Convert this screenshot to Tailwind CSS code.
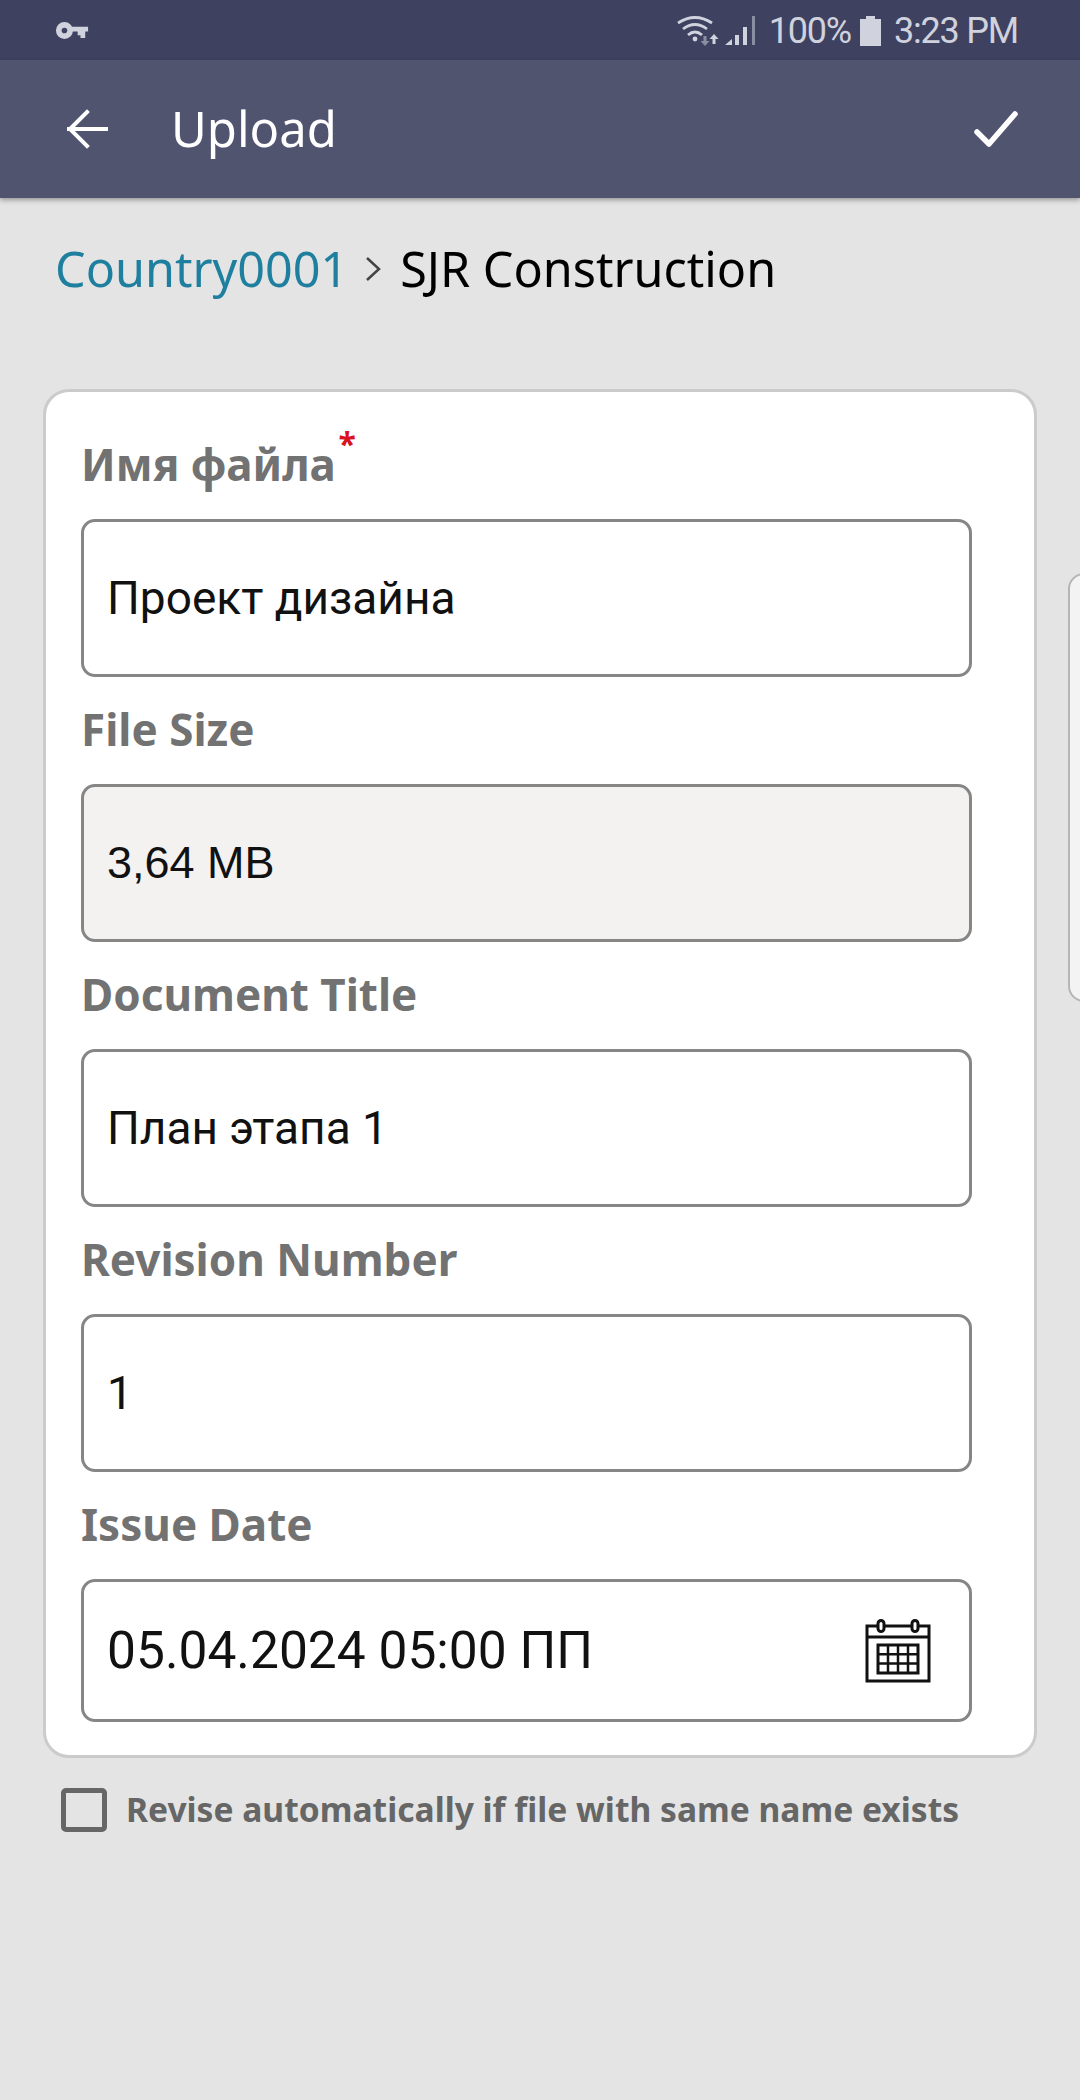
<!DOCTYPE html>
<html lang="en">
<head>
    <meta charset="UTF-8">
    <meta name="viewport" content="width=device-width, initial-scale=1.0">
    <script src="https://cdn.jsdelivr.net/npm/@tailwindcss/browser@4"></script>
    <title>Upload</title>
</head>
<body class="relative w-[1080px] h-[2100px] overflow-hidden bg-[#e4e4e4] font-['Noto_Sans',sans-serif]">

    <!-- status bar -->
    <div class="h-[60px] bg-[#3e4260] flex items-center justify-between pl-[55px] pr-[62px] text-[#d0d2de]">
        <svg width="34" height="19" viewBox="0 0 36 20" fill="currentColor">
            <path fill-rule="evenodd" d="M10 1a9 9 0 1 1 0 18a9 9 0 0 1 0-18zm0 6a3 3 0 1 0 0 6a3 3 0 0 0 0-6z"/>
            <path d="M17 6h18v5h-3v7h-5v-3h-3v-4h-7z"/>
        </svg>
        <div class="flex items-center pt-[2px] font-['Roboto',sans-serif] text-[36px] tracking-[-1.200px] leading-none">
            <svg width="78" height="31" viewBox="0 0 78 31" class="mr-[14px]">
                <g fill="none" stroke="currentColor" stroke-width="2.800">
                    <path d="M1 7Q18 -4 35 7"/>
                    <path d="M6 13Q18 4 30 13"/>
                    <path d="M11 19Q18 13 25 19"/>
                </g>
                <circle cx="18" cy="23" r="2.400" fill="currentColor"/>
                <path d="M26.500 20h3v5h3l-4.500 5l-4.500-5h3z" fill="#8b8da0"/>
                <path d="M37 18l4.500 5h-3v5h-3v-5h-3z" fill="currentColor"/>
                <path d="M48 29l7-6v6z" fill="currentColor"/>
                <path d="M58 19h4v10h-4z M66 11h4v18h-4z" fill="currentColor"/>
                <path d="M75 0h3v29h-3z" fill="#8b8da0"/>
            </svg>
            <span>100%</span>
            <svg width="21" height="30" viewBox="0 0 21 30" class="ml-[9px] mr-[13px]" fill="currentColor">
                <path d="M6 0h9v3h6v27H0V3h6z"/>
            </svg>
            <span>3:23 PM</span>
        </div>
    </div>

    <!-- app bar -->
    <header class="relative h-[138px] bg-[#51546f] flex items-center justify-between pl-[66px] pr-[62px] shadow-[0_2px_5px_rgba(0,0,0,0.35)]">
        <div class="flex items-center">
            <svg width="42" height="40" viewBox="0 0 42 40" fill="none" stroke="white" stroke-width="4" stroke-linecap="square">
                <path d="M3 20H40"/>
                <path d="M21 3L4 20L21 37"/>
            </svg>
            <span class="ml-[63px] pb-[2px] text-[49px] leading-none text-white">Upload</span>
        </div>
        <svg width="44" height="38" viewBox="0 0 44 38" fill="none" stroke="white" stroke-width="5.500" stroke-linecap="round" stroke-linejoin="round">
            <path d="M3 22L15 34L41 4"/>
        </svg>
    </header>

    <main class="px-[43px]">
        <!-- breadcrumb -->
        <div class="h-[191px] pt-[40px] pl-[12px] flex items-start text-[48.500px] leading-[60px]">
            <span class="text-[#1f7f9f]">Country0001</span>
            <svg width="16" height="26" viewBox="0 0 16 26" fill="none" stroke="#444444" stroke-width="2.500" class="ml-[17px] mr-[19px] mt-[18px]">
                <path d="M2 2L14 13L2 24"/>
            </svg>
            <span class="text-black">SJR Construction</span>
        </div>

        <!-- form card -->
        <form class="w-[994px] h-[1369px] bg-white border-[3px] border-[#cbcbcb] rounded-[26px] pl-[35px] pr-[62px]">
            <div class="h-[127px] pt-[17px] flex items-center">
                <label class="relative text-[44px] font-bold leading-none text-[#727272]">Имя файла<span class="absolute -right-[20px] -top-[14px] text-[32px] text-[#d9121f]">*</span></label>
            </div>
            <div class="h-[158px] border-[3px] border-[#868686] rounded-[14px] px-[23px] flex items-center text-[46px] text-[#111111] font-['Roboto',sans-serif]">Проект дизайна</div>

            <div class="h-[107px] pb-[3px] flex items-center text-[44px] font-bold leading-none text-[#727272]">File Size</div>
            <div class="h-[158px] bg-[#f3f2f1] border-[3px] border-[#868686] rounded-[14px] px-[23px] flex items-center text-[45px] text-[#111111] font-['Liberation_Sans',sans-serif]">3,64 MB</div>

            <div class="h-[107px] pb-[3px] flex items-center text-[44px] font-bold leading-none text-[#727272]">Document Title</div>
            <div class="h-[158px] border-[3px] border-[#868686] rounded-[14px] px-[23px] flex items-center text-[46px] text-[#111111] font-['Roboto',sans-serif]">План этапа 1</div>

            <div class="h-[107px] pb-[3px] flex items-center text-[44px] font-bold leading-none text-[#727272]">Revision Number</div>
            <div class="h-[158px] border-[3px] border-[#868686] rounded-[14px] px-[23px] flex items-center text-[46px] text-[#111111] font-['Roboto',sans-serif]">1</div>

            <div class="h-[107px] pb-[3px] flex items-center text-[44px] font-bold leading-none text-[#727272]">Issue Date</div>
            <div class="h-[143px] border-[3px] border-[#868686] rounded-[14px] pl-[23px] pr-[38px] flex items-center justify-between text-[51.500px] text-[#111111] font-['Roboto',sans-serif]">
                <span>05.04.2024 05:00 ПП</span>
                <svg width="66" height="64" viewBox="0 0 66 64" fill="none" stroke="#111111" stroke-width="3">
                    <path d="M2 7H64V62H2Z"/>
                    <path d="M2 18H64"/>
                    <rect x="13" y="1.500" width="6" height="11" rx="3" fill="white"/>
                    <rect x="47" y="1.500" width="6" height="11" rx="3" fill="white"/>
                    <path d="M13 26H53V54H13Z"/>
                    <path d="M13 35.300H53M13 44.600H53M23 26V54M33 26V54M43 26V54" stroke-width="2.500"/>
                </svg>
            </div>
        </form>

        <!-- auto revise -->
        <div class="pl-[18px] pt-[30px] flex items-center">
            <span class="w-[46px] h-[44px] border-[5px] border-[#666666] rounded-[5px]"></span>
            <span class="ml-[19px] text-[33.600px] font-bold leading-none text-[#666666]">Revise automatically if file with same name exists</span>
        </div>
    </main>

    <!-- next card peeking in from the right -->
    <div class="absolute left-[1068px] top-[573px] w-[40px] h-[429px] bg-[#f3f3f3] border-[2px] border-[#b5b5b5] rounded-[16px]"></div>

</body>
</html>
